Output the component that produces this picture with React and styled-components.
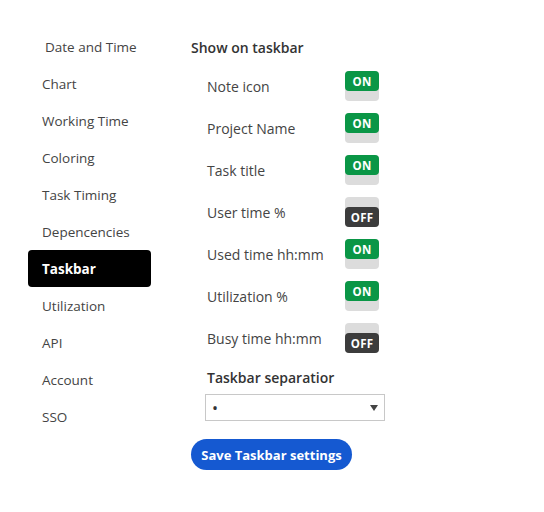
import React from 'react'
import styled, { createGlobalStyle } from 'styled-components'

const Global = createGlobalStyle`
  body {
    margin: 0;
    background: #fff;
    font-family: "Open Sans", "Noto Sans", sans-serif;
    color: #444;
  }
`

const Page = styled.div`
  display: flex;
  width: 544px;
  height: 512px;
`

const Sidebar = styled.nav`
  display: flex;
  flex-direction: column;
  padding: 28px 0 0 28px;
  width: 123px;
`

const NavItem = styled.div`
  height: 37px;
  display: flex;
  align-items: center;
  padding-left: ${p => (p.indent ? 17 : 14)}px;
  font-size: 13.5px;
  border-radius: 4px;
  background: ${p => (p.active ? '#000' : 'transparent')};
  color: ${p => (p.active ? '#fff' : '#444')};
  font-weight: ${p => (p.active ? 700 : 400)};
`

const Main = styled.section`
  display: flex;
  flex-direction: column;
  padding: 38px 0 0 40px;
`

const Title = styled.div`
  font-size: 14px;
  font-weight: 600;
  color: #333;
  line-height: 20px;
  margin-bottom: 7px;
`

const Row = styled.div`
  display: grid;
  grid-template-columns: 138px 34px;
  align-items: center;
  height: 42px;
  padding-left: 16px;
`

const Label = styled.span`
  font-size: 14px;
  color: #444;
`

const Toggle = styled.div`
  width: 34px;
  height: 30px;
  border-radius: 4px;
  background: #dcdcdc;
  display: flex;
  flex-direction: column;
  justify-content: ${p => (p.on ? 'flex-start' : 'flex-end')};
`

const Knob = styled.div`
  height: 20px;
  border-radius: 4px;
  background: ${p => (p.on ? '#0a9646' : '#3c3c3c')};
  color: #fff;
  font-size: 11.5px;
  font-weight: 700;
  display: flex;
  align-items: center;
  justify-content: center;
  letter-spacing: 0.2px;
`

const SubTitle = styled.div`
  font-size: 14px;
  font-weight: 600;
  color: #333;
  line-height: 20px;
  margin: 9px 0 6px 16px;
`

const Select = styled.div`
  margin-left: 14px;
  height: 25px;
  width: 166px;
  border: 1px solid #c8c8c8;
  display: flex;
  align-items: center;
  justify-content: space-between;
  padding: 0 6px 0 6px;
  font-size: 16px;
  color: #333;
`

const Arrow = styled.span`
  width: 0;
  height: 0;
  border-left: 4px solid transparent;
  border-right: 4px solid transparent;
  border-top: 6px solid #444;
`

const SaveButton = styled.button`
  margin-top: 18px;
  align-self: flex-start;
  height: 31px;
  width: 161px;
  border: none;
  border-radius: 16px;
  background: #1559d1;
  color: #fff;
  font-family: inherit;
  font-size: 13px;
  font-weight: 700;
  cursor: pointer;
`

const nav = [
  'Date and Time', 'Chart', 'Working Time', 'Coloring', 'Task Timing',
  'Depencencies', 'Taskbar', 'Utilization', 'API', 'Account', 'SSO',
]

const options = [
  ['Note icon', true],
  ['Project Name', true],
  ['Task title', true],
  ['User time %', false],
  ['Used time hh:mm', true],
  ['Utilization %', true],
  ['Busy time hh:mm', false],
]

export default function App() {
  return (
    <Page>
      <Global />
      <Sidebar>
        {nav.map((n, i) => (
          <NavItem key={n} indent={i === 0} active={n === 'Taskbar'}>{n}</NavItem>
        ))}
      </Sidebar>
      <Main>
        <Title>Show on taskbar</Title>
        {options.map(([label, on]) => (
          <Row key={label}>
            <Label>{label}</Label>
            <Toggle on={on}>
              <Knob on={on}>{on ? 'ON' : 'OFF'}</Knob>
            </Toggle>
          </Row>
        ))}
        <SubTitle>Taskbar separatior</SubTitle>
        <Select>
          <span>•</span>
          <Arrow />
        </Select>
        <SaveButton>Save Taskbar settings</SaveButton>
      </Main>
    </Page>
  )
}
